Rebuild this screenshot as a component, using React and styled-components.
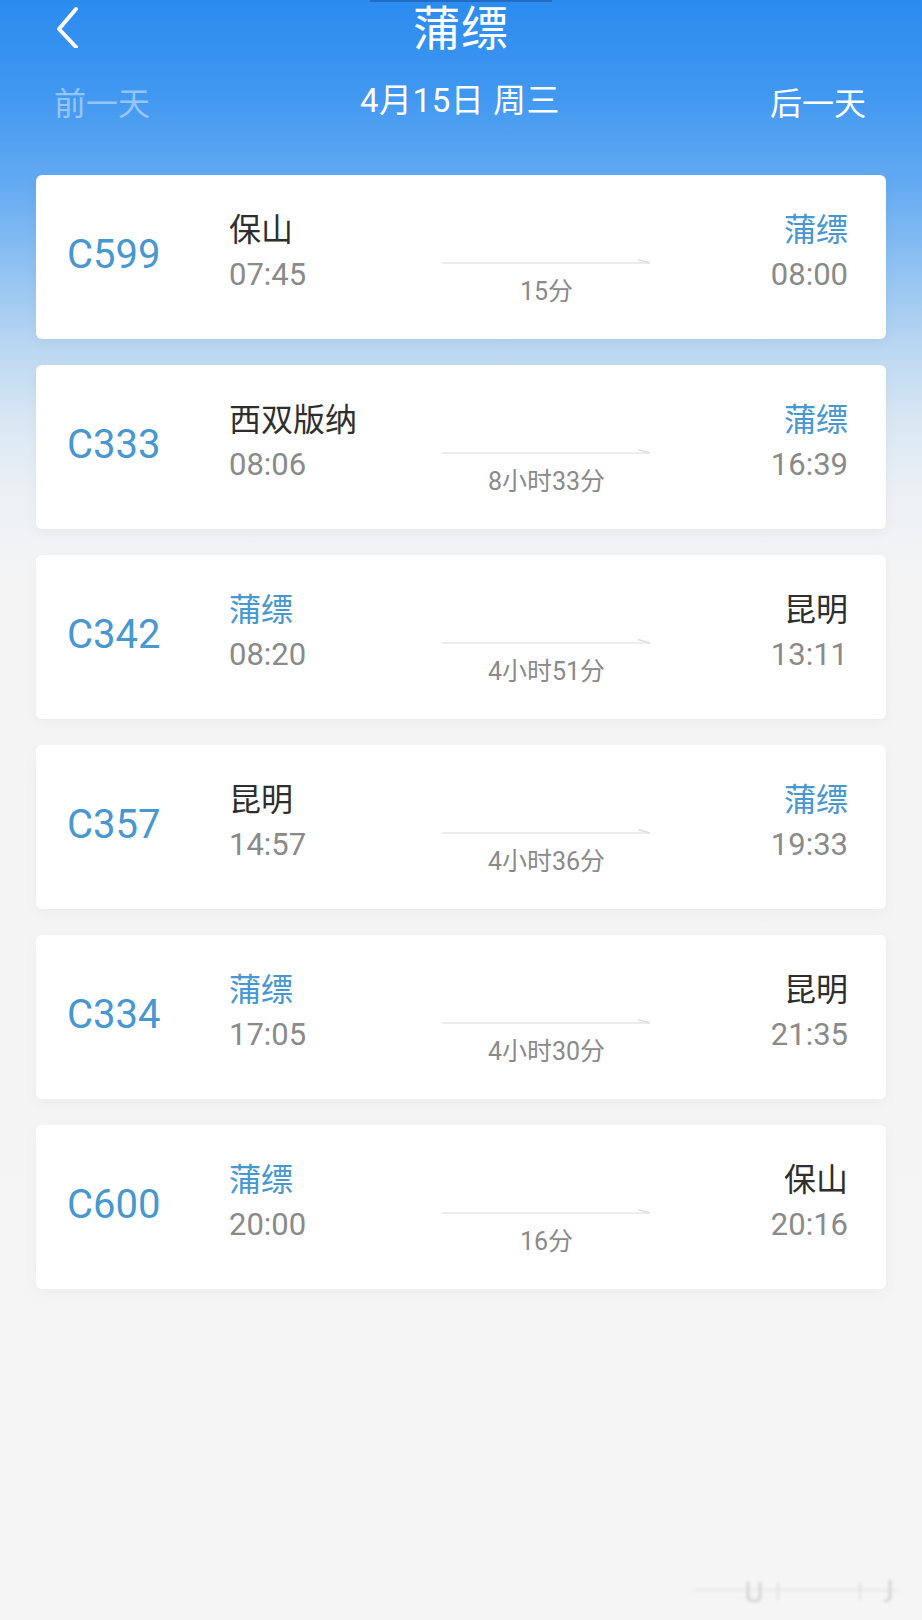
import React from "react";
import styled, { createGlobalStyle } from "styled-components";

const GlobalStyle = createGlobalStyle`
  html, body { margin: 0; padding: 0; }
  body { font-family: Roboto, "Noto Sans CJK SC", sans-serif; background: #f4f4f4; }
  * { box-sizing: border-box; }
`;

const Page = styled.div`
  position: relative;
  min-height: 1620px;
  overflow: hidden;
  background: linear-gradient(
    180deg,
    #2b8bef 0px,
    #3f97f0 90px,
    #62a9f2 180px,
    #8cc0f2 260px,
    #b7d5f1 340px,
    #d9e7f3 420px,
    #edf1f5 500px,
    #f4f4f5 580px,
    #f5f5f5 1620px
  );
  font-family: Roboto, "Noto Sans CJK SC", sans-serif;
`;

const StatusLine = styled.div`
  position: absolute;
  top: 0;
  left: 370px;
  width: 182px;
  height: 2px;
  background: #1f6cc0;
`;

const NavBar = styled.header`
  position: relative;
  height: 54px;
  display: flex;
  align-items: flex-start;
  justify-content: center;
`;

const BackButton = styled.button`
  position: absolute;
  left: 52px;
  top: 2px;
  width: 40px;
  height: 48px;
  padding: 0;
  border: 0;
  background: transparent;
  display: flex;
  align-items: center;
  justify-content: flex-start;
`;

const Title = styled.h1`
  margin: 0;
  font-family: "Noto Sans CJK SC", sans-serif;
  font-weight: 400;
  font-size: 47px;
  line-height: 50px;
  color: #ffffff;
  letter-spacing: 1px;
`;

const DateRow = styled.nav`
  display: grid;
  grid-template-columns: 1fr auto 1fr;
  align-items: center;
  height: 48px;
  margin-top: 23px;
  padding: 0 56px 0 54px;
`;

const DayLink = styled.span`
  font-family: "Noto Sans CJK SC", sans-serif;
  font-size: 32px;
  line-height: 48px;
  color: ${(p) => (p.$disabled ? "rgba(255,255,255,0.45)" : "#ffffff")};
  justify-self: ${(p) => (p.$right ? "end" : "start")};
`;

const CurrentDate = styled.span`
  font-family: Roboto, "Noto Sans CJK SC", sans-serif;
  font-size: 33px;
  line-height: 48px;
  color: #ffffff;
  letter-spacing: 0.5px;
`;

const List = styled.main`
  display: flex;
  flex-direction: column;
  gap: 26px;
  padding: 0 36px;
  margin-top: 50px;
`;

const Card = styled.article`
  height: 164px;
  background: #ffffff;
  border-radius: 6px;
  box-shadow: 0 4px 14px rgba(0, 0, 0, 0.04);
  display: grid;
  grid-template-columns: 162px 213px 209px 1fr;
  padding: 0 38px 0 31px;
`;

const TrainNo = styled.div`
  align-self: center;
  font-family: Roboto, sans-serif;
  font-size: 40px;
  line-height: 48px;
  color: #4797d0;
  margin-top: -4px;
`;

const StopCol = styled.div`
  display: flex;
  flex-direction: column;
  justify-content: center;
  align-items: ${(p) => (p.$right ? "flex-end" : "flex-start")};
  padding-bottom: 12px;
`;

const Station = styled.div`
  font-family: "Noto Sans CJK SC", sans-serif;
  font-size: 32px;
  line-height: 48px;
  color: ${(p) => (p.$home ? "#4797d0" : "#2e2e2e")};
  white-space: nowrap;
`;

const Time = styled.div`
  font-family: Roboto, sans-serif;
  font-size: 31px;
  line-height: 48px;
  color: #8a8a8a;
`;

const MiddleCol = styled.div`
  display: flex;
  flex-direction: column;
  align-items: center;
  padding-top: 82px;
`;

const ArrowLine = styled.svg`
  display: block;
  width: 209px;
  height: 10px;
`;

const Duration = styled.div`
  font-family: Roboto, "Noto Sans CJK SC", sans-serif;
  font-size: 25px;
  line-height: 30px;
  color: #8a8a8a;
  margin-top: 10px;
`;

const Watermark = styled.svg`
  position: absolute;
  right: 12px;
  bottom: 14px;
  width: 220px;
  height: 30px;
  opacity: 0.35;
`;

const HOME = "蒲缥";

const trains = [
  { no: "C599", from: "保山", dep: "07:45", to: "蒲缥", arr: "08:00", dur: "15分" },
  { no: "C333", from: "西双版纳", dep: "08:06", to: "蒲缥", arr: "16:39", dur: "8小时33分" },
  { no: "C342", from: "蒲缥", dep: "08:20", to: "昆明", arr: "13:11", dur: "4小时51分" },
  { no: "C357", from: "昆明", dep: "14:57", to: "蒲缥", arr: "19:33", dur: "4小时36分" },
  { no: "C334", from: "蒲缥", dep: "17:05", to: "昆明", arr: "21:35", dur: "4小时30分" },
  { no: "C600", from: "蒲缥", dep: "20:00", to: "保山", arr: "20:16", dur: "16分" },
];

function Arrow() {
  return (
    <ArrowLine viewBox="0 0 209 10">
      <line x1="0" y1="6" x2="208" y2="6" stroke="#e6e6e6" strokeWidth="1.6" />
      <line x1="196" y1="2.5" x2="208" y2="6" stroke="#dedede" strokeWidth="1.6" />
    </ArrowLine>
  );
}

function TrainCard({ t }) {
  return (
    <Card>
      <TrainNo>{t.no}</TrainNo>
      <StopCol>
        <Station $home={t.from === HOME}>{t.from}</Station>
        <Time>{t.dep}</Time>
      </StopCol>
      <MiddleCol>
        <Arrow />
        <Duration>{t.dur}</Duration>
      </MiddleCol>
      <StopCol $right>
        <Station $home={t.to === HOME}>{t.to}</Station>
        <Time>{t.arr}</Time>
      </StopCol>
    </Card>
  );
}

export default function App() {
  return (
    <>
      <GlobalStyle />
      <Page>
        <StatusLine />
        <NavBar>
          <BackButton aria-label="返回">
            <svg width="30" height="44" viewBox="0 0 30 44">
              <polyline
                points="24,5 7,25 24,43"
                fill="none"
                stroke="#ffffff"
                strokeWidth="4"
                strokeLinecap="round"
                strokeLinejoin="round"
              />
            </svg>
          </BackButton>
          <Title>蒲缥</Title>
        </NavBar>
        <DateRow>
          <DayLink $disabled>前一天</DayLink>
          <CurrentDate>4月15日 周三</CurrentDate>
          <DayLink $right>后一天</DayLink>
        </DateRow>
        <List>
          {trains.map((t) => (
            <TrainCard key={t.no} t={t} />
          ))}
        </List>
        <Watermark viewBox="0 0 220 30">
          <defs>
            <filter id="wmBlur">
              <feGaussianBlur stdDeviation="1.6" />
            </filter>
          </defs>
          <g filter="url(#wmBlur)" fill="none" stroke="#9a9a9a">
            <line x1="2" y1="14" x2="210" y2="14" strokeWidth="2" opacity="0.4" />
            <path d="M58 6 V20 Q58 25 64 25 Q70 25 70 20 V6" strokeWidth="3" />
            <line x1="88" y1="6" x2="88" y2="24" strokeWidth="2" opacity="0.6" />
            <line x1="170" y1="6" x2="170" y2="24" strokeWidth="2" opacity="0.6" />
            <path d="M200 4 V20 Q200 25 194 25" strokeWidth="3" />
          </g>
        </Watermark>
      </Page>
    </>
  );
}
